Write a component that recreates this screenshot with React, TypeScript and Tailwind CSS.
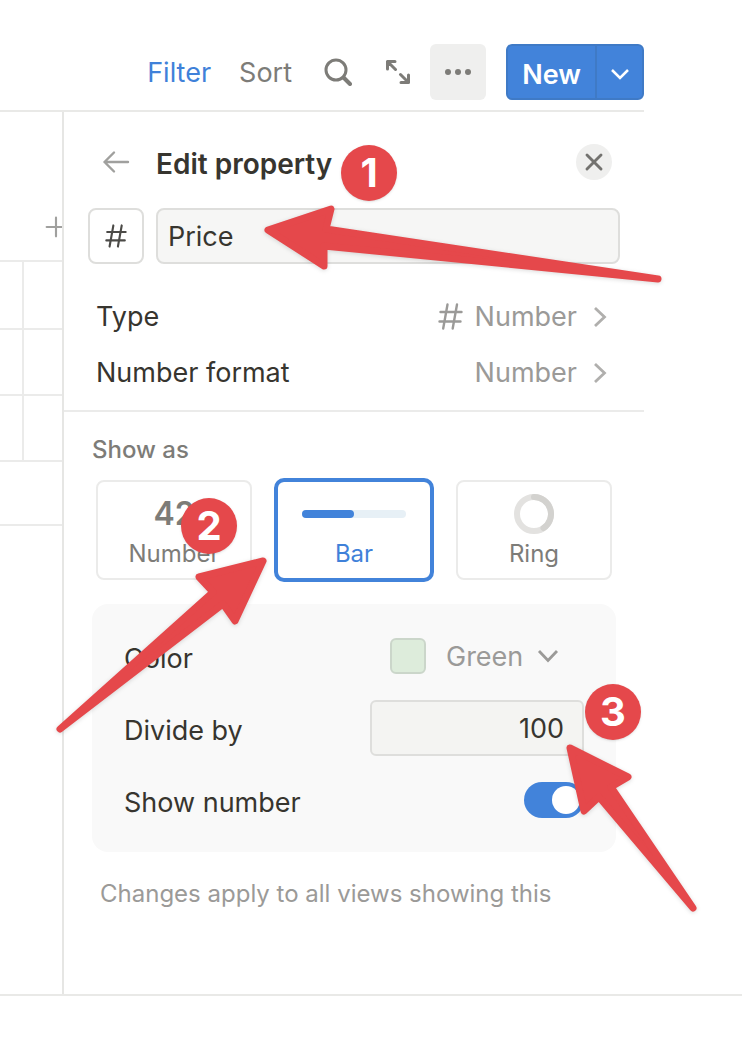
import { Plus, X } from "lucide-react";

const gridRows = [
  "h-[150px]",
  "h-[68px]",
  "h-[66px]",
  "h-[66px]",
  "h-[64px]",
];

const badges = [
  { label: "1", place: "left-[341px] top-[145px]" },
  { label: "2", place: "left-[181px] top-[498px]" },
  { label: "3", place: "left-[585px] top-[684px]" },
];

const arrows = [
  "M268 230 331 209 326 229 658 279 324 246 324 266Z",
  "M263 561 199 577 213 592 60 729 223 604 235 621Z",
  "M570 748 628 777 611 787 693 908 599 797 584 811Z",
];

function HashIcon({ className }: { className: string }) {
  return (
    <svg
      aria-hidden="true"
      viewBox="0 0 25 27"
      className={className}
      fill="none"
      stroke="currentColor"
      strokeWidth="2.400"
      strokeLinecap="round"
    >
      <path d="M9.500 1.500 5.200 25.500M19 1.500 14.700 25.500M2.500 9H23.500M1.500 18.500H22.500" />
    </svg>
  );
}

function ChevronIcon({ className }: { className: string }) {
  return (
    <svg
      aria-hidden="true"
      viewBox="0 0 14 22"
      className={className}
      fill="none"
      stroke="currentColor"
      strokeWidth="2.800"
    >
      <path d="m2 2 9.500 9L2 20" />
    </svg>
  );
}

function Toolbar() {
  return (
    <header className="mr-[98px] flex h-[112px] items-center justify-end border-b-2 border-[#e9e9e7] pt-11 pb-[10px] text-[27px] text-[#7d7c78]">
      <button type="button" className="pt-px text-[#3f81d9]">
        Filter
      </button>
      <button type="button" className="ml-7 pt-px">
        Sort
      </button>
      <button type="button" aria-label="Search" className="ml-8">
        <svg
          aria-hidden="true"
          viewBox="0 0 28 28"
          className="size-7"
          fill="none"
          stroke="currentColor"
          strokeWidth="3"
          strokeLinecap="round"
        >
          <circle cx="12" cy="12" r="10" />
          <path d="m19.500 19.500 6.500 6.500" strokeWidth="4" />
        </svg>
      </button>
      <button type="button" aria-label="Expand" className="ml-[34px]">
        <svg
          aria-hidden="true"
          viewBox="0 0 24 24"
          className="size-6"
          fill="none"
          stroke="currentColor"
          strokeWidth="3"
          strokeLinecap="round"
          strokeLinejoin="round"
        >
          <path d="M1.500 9V1.500H9M1.500 1.500 9.500 9.500M22.500 15V22.500H15M22.500 22.500 14.500 14.500" />
        </svg>
      </button>
      <button
        type="button"
        aria-label="More"
        className="ml-5 flex size-14 items-center justify-center gap-1 rounded-[6px] bg-[#efefee]"
      >
        <span className="size-[6px] rounded-full bg-current" />
        <span className="size-[6px] rounded-full bg-current" />
        <span className="size-[6px] rounded-full bg-current" />
      </button>
      <div className="ml-5 flex h-14 w-[138px] rounded-[6px] border-2 border-[#3f7ac6] bg-[#4283da] font-semibold text-white">
        <button type="button" className="flex-1 pt-[6px]">
          New
        </button>
        <button
          type="button"
          aria-label="New options"
          className="flex w-[47px] items-center justify-center border-l-2 border-[#3f7ac6]"
        >
          <svg
            aria-hidden="true"
            viewBox="0 0 18 12"
            className="mt-1 h-3 w-[18px]"
            fill="none"
            stroke="currentColor"
            strokeWidth="2.500"
          >
            <path d="m1 2 8 8 8-8" />
          </svg>
        </button>
      </div>
    </header>
  );
}

function GridEdge() {
  return (
    <div className="relative w-[62px] shrink-0 overflow-hidden">
      {gridRows.map((height, index) => (
        <div key={index} className={`${height} border-b-2 border-[#ebebea]`}>
          {index > 0 && index < 4 && (
            <div className="h-full w-6 border-r-2 border-[#ebebea]" />
          )}
        </div>
      ))}
      <button
        type="button"
        aria-label="Add column"
        className="absolute top-[99px] left-10 text-[#a0a09e]"
      >
        <Plus aria-hidden="true" className="size-8" strokeWidth={1.6} />
      </button>
    </div>
  );
}

function ShowAs() {
  const card =
    "flex h-[100px] flex-col items-center rounded-[8px] has-checked:outline-4 has-checked:-outline-offset-2 has-checked:outline-[#4283da] has-checked:text-[#3f81d9] border-2 border-[#ebebea] text-[24px] leading-8 text-[#7d7c78]";

  return (
    <fieldset className="px-7">
      <legend className="pt-5 text-[24px] leading-9 font-medium text-[#7d7c78]">
        Show as
      </legend>
      <div className="mx-1 mt-3 grid grid-cols-3 gap-6">
        <label className={card}>
          <input type="radio" name="show-as" className="sr-only" />
          <span className="flex h-14 items-center pt-2 text-[32px] font-semibold">
            42
          </span>
          Number
        </label>
        <label className={card}>
          <input
            type="radio"
            name="show-as"
            defaultChecked
            className="sr-only"
          />
          <span className="flex h-14 items-center pt-2">
            <span className="h-2 w-[104px] rounded-full bg-[#e7f0f6]">
              <span className="block h-2 w-1/2 rounded-full bg-[#4283da]" />
            </span>
          </span>
          Bar
        </label>
        <label className={card}>
          <input type="radio" name="show-as" className="sr-only" />
          <span className="flex h-14 items-center pt-2">
            <svg
              aria-hidden="true"
              viewBox="0 0 40 40"
              className="size-10"
              fill="none"
              strokeWidth="6"
              strokeLinecap="round"
            >
              <circle cx="20" cy="20" r="17" stroke="#e3e2e0" />
              <path d="M20 3A17 17 0 0 1 29.500 34.100" stroke="#d3d2cf" />
            </svg>
          </span>
          Ring
        </label>
      </div>
    </fieldset>
  );
}

function BarOptions() {
  return (
    <div className="mx-7 mt-6 rounded-[16px] bg-[#f9f9f9] px-8 py-4">
      <div className="flex h-[72px] items-center">
        <label htmlFor="color" className="flex-1 pt-[6px]">
          Color
        </label>
        <span className="size-9 rounded-[6px] border-2 border-[#cbd6ca] bg-[#ddecdb]" />
        <div className="relative mr-[26px] ml-5 text-[#9b9a98]">
          <select
            id="color"
            className="block w-28 appearance-none pt-px outline-none"
          >
            <option>Green</option>
          </select>
          <ChevronIcon className="pointer-events-none absolute top-[9px] right-[3px] h-[22px] w-[14px] rotate-90" />
        </div>
      </div>
      <div className="flex h-[72px] items-center justify-between">
        <label htmlFor="divide" className="pt-[6px]">
          Divide by
        </label>
        <input
          id="divide"
          type="text"
          defaultValue="100"
          className="h-14 w-[214px] rounded-[6px] border-2 border-[#dededc] bg-[#f4f4f2] px-[18px] text-right outline-none"
        />
      </div>
      <div className="flex h-[72px] items-center justify-between">
        <label htmlFor="show-number" className="pt-[6px]">
          Show number
        </label>
        <input
          id="show-number"
          type="checkbox"
          role="switch"
          defaultChecked
          className="h-9 w-[60px] appearance-none rounded-full bg-[#c9c8c5] p-1 before:block before:size-7 before:rounded-full before:bg-white checked:bg-[#4283da] checked:before:ml-6"
        />
      </div>
    </div>
  );
}

function PropertyPanel() {
  return (
    <aside className="mr-[98px] flex-1 border-l-2 border-[#e6e6e4]">
      <div className="flex h-24 items-center pt-1 pr-8 pl-[38px]">
        <button type="button" aria-label="Back" className="text-[#a0a09e]">
          <svg
            aria-hidden="true"
            viewBox="0 0 28 24"
            className="h-6 w-7"
            fill="none"
            stroke="currentColor"
            strokeWidth="2.400"
            strokeLinecap="round"
            strokeLinejoin="round"
          >
            <path d="M26 12H2.500M12 2.500 2.500 12 12 21.500" />
          </svg>
        </button>
        <h1 className="ml-[26px] flex-1 pt-1 text-[28px] font-semibold">
          Edit property
        </h1>
        <button
          type="button"
          aria-label="Close"
          className="flex size-9 items-center justify-center rounded-full bg-[#efefee] text-[#73726f]"
        >
          <X aria-hidden="true" className="size-7" strokeWidth={2.5} />
        </button>
      </div>
      <div className="flex gap-3 px-6">
        <button
          type="button"
          aria-label="Property icon"
          className="flex size-14 shrink-0 items-center justify-center rounded-[8px] border-2 border-[#dededc] text-[#4b4a47]"
        >
          <HashIcon className="h-6 w-[22px]" />
        </button>
        <input
          type="text"
          aria-label="Property name"
          defaultValue="Price"
          className="h-14 min-w-0 flex-1 rounded-[8px] border-2 border-[#dededc] bg-[#f6f6f5] px-[10px] outline-none"
        />
      </div>
      <div className="border-b-2 border-[#ebebea] pt-6 pb-[10px]">
        <button
          type="button"
          className="flex h-14 w-full items-center pt-px pr-[37px] pl-8 text-left"
        >
          <span className="flex-1">Type</span>
          <HashIcon className="h-[27px] w-[25px] text-[#9b9a98]" />
          <span className="ml-3 text-[#9b9a98]">Number</span>
          <ChevronIcon className="ml-4 h-[22px] w-[14px] text-[#b0afad]" />
        </button>
        <button
          type="button"
          className="flex h-14 w-full items-center pt-px pr-[37px] pl-8 text-left"
        >
          <span className="flex-1">Number format</span>
          <span className="text-[#9b9a98]">Number</span>
          <ChevronIcon className="ml-4 h-[22px] w-[14px] text-[#b0afad]" />
        </button>
      </div>
      <ShowAs />
      <BarOptions />
      <p className="mx-9 mt-6 text-[24px] leading-9 whitespace-nowrap text-[#9b9a98]">
        Changes apply to all views showing this
      </p>
    </aside>
  );
}

export default function App() {
  return (
    <main className="relative min-h-screen bg-white font-['Inter',sans-serif] text-[27px] leading-10 text-[#37352f]">
      <Toolbar />
      <div className="flex min-h-[884px] border-b-2 border-[#e9e9e7]">
        <GridEdge />
        <PropertyPanel />
      </div>
      <svg
        aria-hidden="true"
        viewBox="0 0 742 1052"
        className="pointer-events-none absolute top-0 left-0 h-[1052px] w-[742px] drop-shadow-sm"
        fill="#e5484b"
        stroke="#e5484b"
        strokeWidth="7"
        strokeLinejoin="round"
      >
        {arrows.map((d) => (
          <path key={d} d={d} />
        ))}
      </svg>
      {badges.map(({ label, place }) => (
        <span
          key={label}
          className={`${place} absolute flex size-14 items-center justify-center rounded-full bg-[#e5484b] text-[40px] font-bold text-white shadow-sm`}
        >
          {label}
        </span>
      ))}
    </main>
  );
}
